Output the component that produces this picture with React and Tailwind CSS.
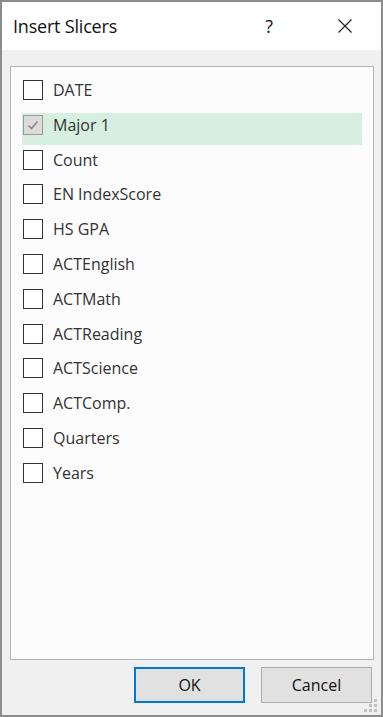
import React from "react";

const items = [
  "DATE",
  "Major 1",
  "Count",
  "EN IndexScore",
  "HS GPA",
  "ACTEnglish",
  "ACTMath",
  "ACTReading",
  "ACTScience",
  "ACTComp.",
  "Quarters",
  "Years",
];

function Row({ label, checked }) {
  return (
    <div
      className={
        "h-[32px] flex items-start " + (checked ? "bg-[#d6efe1]" : "")
      }
    >
      <div
        className={
          "mt-[2px] ml-[1px] w-[20px] h-[20px] border flex items-center justify-center shrink-0 " +
          (checked ? "border-[#9a9a9a] bg-[#dcdcdc]" : "border-[#333333] bg-white")
        }
      >
        {checked && (
          <svg width="14" height="14" viewBox="0 0 14 14">
            <path d="M2.5 7.5 L5.5 10.5 L11.5 3.5" fill="none" stroke="#888888" strokeWidth="1.6" />
          </svg>
        )}
      </div>
      <span className="ml-[10px] text-[16px] leading-[24px] text-[#333333]">{label}</span>
    </div>
  );
}

export default function App() {
  return (
    <div
      className="w-[383px] h-[717px] border-2 border-[#8c8c8c] bg-[#f0f0f0] flex flex-col relative"
      style={{ fontFamily: '"Open Sans", "Noto Sans", sans-serif' }}
    >
      <div className="h-[48px] bg-white flex items-center shrink-0">
        <span className="ml-[11px] text-[18px] tracking-[-0.2px] text-[#111111]">Insert Slicers</span>
        <span className="ml-auto mr-[65px] text-[18px] text-[#111111]">?</span>
        <svg className="mr-[29px]" width="14" height="14" viewBox="0 0 14 14">
          <path d="M0.5 0.5 L13.5 13.5 M13.5 0.5 L0.5 13.5" stroke="#222" strokeWidth="1.2" />
        </svg>
      </div>
      <div className="mt-[16px] ml-[8px] mr-[7px] h-[594px] border border-[#b4b4b4] bg-[#fcfcfc] px-[11px] pt-[11px] flex flex-col gap-[2.8px]">
        {items.map((it, i) => (
          <Row key={it} label={it} checked={i === 1} />
        ))}
      </div>
      <div className="mt-[7px] flex justify-end gap-[16px] mr-[9px]">
        <button className="w-[111px] h-[36px] bg-[#e1e1e1] border-2 border-[#0078d7] text-[16px] text-[#111111]">
          OK
        </button>
        <button className="w-[111px] h-[36px] bg-[#e1e1e1] border border-[#adadad] text-[16px] text-[#111111]">
          Cancel
        </button>
      </div>
      <svg className="absolute right-[2px] bottom-[1px]" width="16" height="16" viewBox="0 0 16 16">
        <rect x="11" y="1" width="3" height="3" fill="#c2c2c2" />
        <rect x="6" y="6" width="3" height="3" fill="#c2c2c2" />
        <rect x="11" y="6" width="3" height="3" fill="#c2c2c2" />
        <rect x="1" y="11" width="3" height="3" fill="#c2c2c2" />
        <rect x="6" y="11" width="3" height="3" fill="#c2c2c2" />
        <rect x="11" y="11" width="3" height="3" fill="#c2c2c2" />
      </svg>
    </div>
  );
}
